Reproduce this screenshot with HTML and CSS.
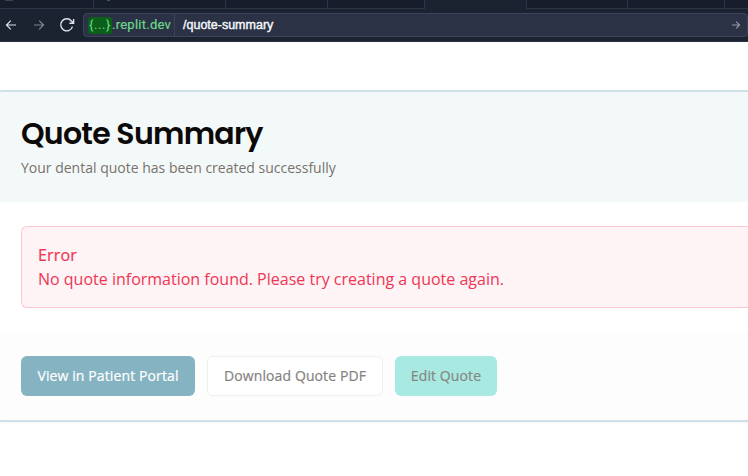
FILE: index.html
```html
<!DOCTYPE html>
<html lang="en">
<head>
<meta charset="utf-8">
<title>Quote Summary</title>
<link rel="stylesheet" href="styles.css">
</head>
<body>
<header class="browser">
  <div class="tabs">
    <div class="tab tab-first"><i class="tab-icon"></i></div>
    <div class="tab tab-second"><i class="tab-dot"></i></div>
    <div class="tab tab-third"></div>
    <div class="tab tab-fourth"></div>
    <div class="tab tab-active"></div>
    <div class="tab tab-sixth"></div>
    <div class="tab tab-seventh"></div>
    <div class="tab tab-last"></div>
  </div>
  <div class="toolbar">
    <svg class="nav-icon back" viewBox="0 0 12 12"><path d="M11 6H1.5M5.8 1.7 1.5 6l4.3 4.3"/></svg>
    <svg class="nav-icon forward" viewBox="0 0 12 12"><path d="M1 6h9.5M6.2 1.7 10.5 6l-4.3 4.3"/></svg>
    <svg class="nav-icon reload" viewBox="0 0 16 16"><path d="M13.5 9.6A6 6 0 1 1 12.4 4L14.4 6M14.6 2v4.2h-4.2"/></svg>
    <div class="address">
      <div class="host"><span class="host-token">{...}</span><span class="host-name">.replit.dev</span></div>
      <span class="path">/quote-summary</span>
      <svg class="go" viewBox="0 0 10 10"><path d="M1 5h7.5M5.2 1.7 8.5 5 5.2 8.3"/></svg>
    </div>
  </div>
</header>
<main class="card">
  <section class="card-header">
    <h1 class="title">Quote Summary</h1>
    <p class="subtitle">Your dental quote has been created successfully</p>
  </section>
  <section class="card-body">
    <div class="alert">
      <div class="alert-title">Error</div>
      <div class="alert-text">No quote information found. Please try creating a quote again.</div>
    </div>
  </section>
  <footer class="card-footer">
    <button class="button primary">View in Patient Portal</button>
    <button class="button outline">Download Quote PDF</button>
    <button class="button accent">Edit Quote</button>
  </footer>
</main>
</body>
</html>
```
FILE: styles.css
```css
* { box-sizing: border-box; }
body {
  margin: 0;
  height: 476px;
  overflow: hidden;
  background: #fff;
  font-family: "Open Sans", sans-serif;
}
.browser {
  height: 42px;
  background: #1c2330;
  border-bottom: 1px solid #2b3245;
}
.tabs { display: flex; height: 9px; }
.tab {
  background: #181d2c;
  border-right: 1px solid #2e3445;
  border-bottom: 1px solid #2e3445;
}
.tab-first { width: 94px; padding-left: 5px; }
.tab-second { width: 132px; padding-left: 13px; }
.tab-third { width: 102px; }
.tab-fourth { width: 97px; }
.tab-active { width: 102px; background: none; border-bottom: 0; }
.tab-sixth { width: 101px; }
.tab-seventh { width: 97px; }
.tab-last { flex: 1; border-right: 0; }
.tab-icon { display: block; width: 8px; height: 1px; background: #3b4252; }
.tab-dot { display: block; width: 3px; height: 1px; background: #2e6741; }
.toolbar { display: flex; align-items: center; height: 32px; padding-left: 5px; }
.nav-icon, .go { fill: none; stroke: #dfe2e8; stroke-width: 1.2; }
.back, .forward { width: 12px; height: 12px; }
.forward { margin-left: 16px; stroke: #7f8591; }
.reload { width: 16px; height: 16px; margin-left: 14px; stroke-width: 1.4; }
.address {
  display: flex;
  align-items: center;
  width: 665px;
  height: 24px;
  margin-left: 8px;
  border: 1px solid #3c445c;
  border-radius: 4px;
  background: #2b3245;
  font: 400 13px/16px Roboto, sans-serif;
}
.host {
  display: flex;
  align-items: center;
  width: 91px;
  height: 22px;
  padding-left: 4px;
  border-right: 1px solid #3c445c;
  color: #6cd98a;
}
.host-token {
  width: 24px;
  height: 17px;
  border-radius: 3px;
  background: #0b5f19;
  letter-spacing: .6px;
  text-align: center;
}
.host-name { letter-spacing: .25px; -webkit-text-stroke: .2px; }
.path {
  padding-left: 8px;
  font: 400 12.5px/16px "Liberation Sans", sans-serif;
  -webkit-text-stroke: .4px;
  color: #f5f9fc;
}
.go { width: 10px; height: 10px; margin: 0 6px 0 auto; stroke: #9297a4; }
.card {
  height: 332px;
  margin: 48px 0 0 -5px;
  overflow: hidden;
  border: 2px solid #cde1e8;
  border-right: 0;
  border-radius: 8px 0 0 8px;
  background: #fff;
  box-shadow: 0 1px 2px #0000000d;
}
.card-header { height: 110px; padding: 24px; background: #f3f9f9; }
.title {
  margin: 0;
  font: 600 30px/36px Poppins, Inter, sans-serif;
  letter-spacing: -.75px;
  color: #0c0a09;
}
.subtitle { margin: 6px 0 0; font-size: 14px; line-height: 20px; color: #79716b; }
.card-body { height: 130px; padding: 24px 0 24px 24px; }
.alert {
  height: 82px;
  padding: 16px;
  border: 1px solid #fbc8d2;
  border-right: 0;
  border-radius: 6px 0 0 6px;
  background: #fef3f5;
  color: #ef3654;
  font-size: 16px;
  line-height: 24px;
}
.alert-title { font-weight: 500; letter-spacing: .15px; -webkit-text-stroke: .2px; }
.card-footer { display: flex; gap: 12px; height: 88px; padding: 24px; background: #fdfdfd; }
.button {
  height: 40px;
  padding: 0;
  border: 0;
  border-radius: 6px;
  font: 500 14px/20px "Open Sans", sans-serif;
  letter-spacing: .11px;
  -webkit-text-stroke: .2px;
}
.primary { width: 174px; background: #85b3c2; color: #fff; }
.outline { width: 176px; border: 1px solid #efefef; background: #fff; color: #848281; }
.accent { width: 102px; background: #a8eae1; color: #858784; }
```
